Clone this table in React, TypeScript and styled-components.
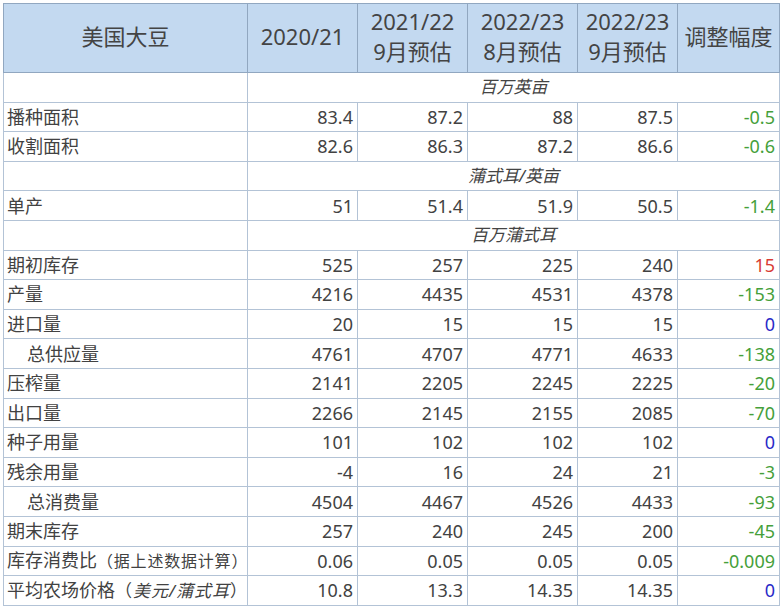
import React from "react";
import styled, { createGlobalStyle } from "styled-components";

const GlobalStyle = createGlobalStyle`
  html, body { margin: 0; padding: 0; background: #ffffff; }
  body { font-family: "Noto Sans", "Noto Sans CJK SC", sans-serif; }
`;

const Page = styled.div`
  padding: 3px 0 0 3px;
`;

const Table = styled.table`
  border-collapse: collapse;
  table-layout: fixed;
  width: 777px;
  border: 1px solid #8a9db3;
  color: #424242;
  font-size: 18px;
`;

const HeadRow = styled.tr`
  height: 69px;
  background: #c3d9f0;
`;

const HeadCell = styled.th`
  border: 1px solid #91a7c0;
  font-weight: 400;
  font-size: 22px;
  line-height: 30px;
  color: #444444;
  text-align: center;
  vertical-align: middle;
  padding: 0 0 4px;
  white-space: nowrap;
`;

const BodyRow = styled.tr`
  height: 29.6px;
`;

const LabelCell = styled.td<{ $indent?: boolean }>`
  border: 1px solid #b3c3d6;
  padding: 0 0 0 ${(p) => (p.$indent ? 23 : 3)}px;
  text-align: left;
  white-space: nowrap;
  line-height: 20px;
`;

const NumCell = styled.td<{ $tone?: "up" | "down" | "flat" }>`
  border: 1px solid #b3c3d6;
  padding: 0 4px 0 0;
  text-align: right;
  white-space: nowrap;
  line-height: 20px;
  color: ${(p) =>
    p.$tone === "down"
      ? "#45a03a"
      : p.$tone === "up"
      ? "#d83c34"
      : p.$tone === "flat"
      ? "#2a2ac8"
      : "#424242"};
`;

const UnitCell = styled.td`
  border: 1px solid #b3c3d6;
  text-align: center;
  font-style: italic;
  font-size: 17px;
  line-height: 20px;
  color: #444444;
`;

const Note = styled.span<{ $italic?: boolean; $size: number; $track: number }>`
  font-size: ${(p) => p.$size}px;
  letter-spacing: ${(p) => p.$track}px;
  font-style: ${(p) => (p.$italic ? "italic" : "normal")};
`;

type Row =
  | { kind: "unit"; text: string }
  | {
      kind: "data";
      label: React.ReactNode;
      indent?: boolean;
      values: string[];
      adj: string;
    };

const rows: Row[] = [
  { kind: "unit", text: "百万英亩" },
  { kind: "data", label: "播种面积", values: ["83.4", "87.2", "88", "87.5"], adj: "-0.5" },
  { kind: "data", label: "收割面积", values: ["82.6", "86.3", "87.2", "86.6"], adj: "-0.6" },
  { kind: "unit", text: "蒲式耳/英亩" },
  { kind: "data", label: "单产", values: ["51", "51.4", "51.9", "50.5"], adj: "-1.4" },
  { kind: "unit", text: "百万蒲式耳" },
  { kind: "data", label: "期初库存", values: ["525", "257", "225", "240"], adj: "15" },
  { kind: "data", label: "产量", values: ["4216", "4435", "4531", "4378"], adj: "-153" },
  { kind: "data", label: "进口量", values: ["20", "15", "15", "15"], adj: "0" },
  { kind: "data", label: "总供应量", indent: true, values: ["4761", "4707", "4771", "4633"], adj: "-138" },
  { kind: "data", label: "压榨量", values: ["2141", "2205", "2245", "2225"], adj: "-20" },
  { kind: "data", label: "出口量", values: ["2266", "2145", "2155", "2085"], adj: "-70" },
  { kind: "data", label: "种子用量", values: ["101", "102", "102", "102"], adj: "0" },
  { kind: "data", label: "残余用量", values: ["-4", "16", "24", "21"], adj: "-3" },
  { kind: "data", label: "总消费量", indent: true, values: ["4504", "4467", "4526", "4433"], adj: "-93" },
  { kind: "data", label: "期末库存", values: ["257", "240", "245", "200"], adj: "-45" },
  {
    kind: "data",
    label: (
      <>
        库存消费比<Note $size={16} $track={0.8}>（据上述数据计算）</Note>
      </>
    ),
    values: ["0.06", "0.05", "0.05", "0.05"],
    adj: "-0.009",
  },
  {
    kind: "data",
    label: (
      <>
        平均农场价格<Note $size={17} $track={1}>（</Note>
        <Note $size={17} $track={1} $italic>美元/蒲式耳</Note>
        <Note $size={17} $track={1}>）</Note>
      </>
    ),
    values: ["10.8", "13.3", "14.35", "14.35"],
    adj: "0",
  },
];

const toneOf = (v: string): "up" | "down" | "flat" => {
  const n = parseFloat(v);
  if (n > 0) return "up";
  if (n < 0) return "down";
  return "flat";
};

export default function App() {
  return (
    <Page>
      <GlobalStyle />
      <Table>
        <colgroup>
          <col style={{ width: 244 }} />
          <col style={{ width: 110 }} />
          <col style={{ width: 110 }} />
          <col style={{ width: 110 }} />
          <col style={{ width: 100 }} />
          <col style={{ width: 102 }} />
        </colgroup>
        <thead>
          <HeadRow>
            <HeadCell>美国大豆</HeadCell>
            <HeadCell>2020/21</HeadCell>
            <HeadCell>
              2021/22
              <br />
              9月预估
            </HeadCell>
            <HeadCell>
              2022/23
              <br />
              8月预估
            </HeadCell>
            <HeadCell>
              2022/23
              <br />
              9月预估
            </HeadCell>
            <HeadCell>调整幅度</HeadCell>
          </HeadRow>
        </thead>
        <tbody>
          {rows.map((r, i) =>
            r.kind === "unit" ? (
              <BodyRow key={i}>
                <LabelCell />
                <UnitCell colSpan={5}>{r.text}</UnitCell>
              </BodyRow>
            ) : (
              <BodyRow key={i}>
                <LabelCell $indent={r.indent}>{r.label}</LabelCell>
                {r.values.map((v, j) => (
                  <NumCell key={j}>{v}</NumCell>
                ))}
                <NumCell $tone={toneOf(r.adj)}>{r.adj}</NumCell>
              </BodyRow>
            )
          )}
        </tbody>
      </Table>
    </Page>
  );
}
